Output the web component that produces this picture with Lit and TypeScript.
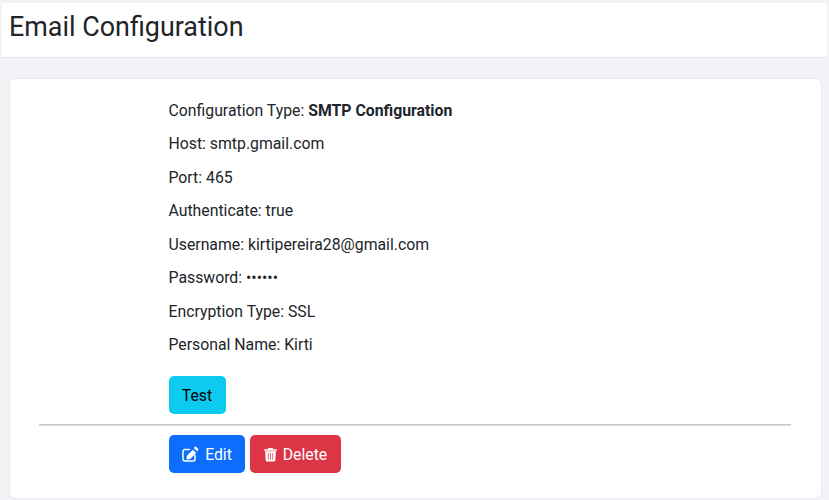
import { LitElement, html, css } from "lit";
import { customElement } from "lit/decorators.js";

@customElement("app-root")
export class AppRoot extends LitElement {
  static styles = css`
    :host { display: block; width: 829px; height: 500px; overflow: hidden; background: #f1f3f6; font-family: Roboto, "Liberation Sans", sans-serif; color: #212529; font-size: 15.8px; box-sizing: border-box; padding: 3px 2px 0 2px; }
    * { box-sizing: border-box; }
    .head { height: 55px; background: #fff; border-bottom: 1px solid #e4e5e8; padding: 8px 0 0 7px; margin-bottom: 21px; }
    h1 { margin: 0; font-size: 26.9px; font-weight: 400; line-height: 33px; color: #212529; }
    .card { background: #fff; margin: 0 6px 0 7.5px; height: 419px; border-radius: 5px; box-shadow: 0 0 2px rgba(0,0,0,.14); padding: 21px 30px 0 29.5px; }
    .body { padding-left: 129.5px; }
    p { margin: 0 0 11.43px; line-height: 22px; height: 22px; }
    b { font-weight: 700; }
    .btn { display: inline-flex; align-items: center; justify-content: center; gap: 5px; height: 38px; border-radius: 5px; font-size: 15.8px; border: 0; padding: 0; font-family: inherit; }
    .test { background: #0dcaf0; color: #000; width: 57px; margin-top: 9px; }
    hr { border: 0; border-top: 1px solid #c9c9c9; border-bottom: 1px solid #dedede; margin: 10px 0 9px; height: 2px; }
    .row { display: flex; gap: 5px; padding-left: 129.5px; }
    .edit { background: #0d6efd; color: #fff; width: 76px; gap: 6px; padding-left: 1px; }
    .edit svg { width: 17px; height: 16px; fill: none; }
    .del { background: #dc3545; color: #fff; width: 91px; }
    svg { width: 15px; height: 15px; fill: currentColor; display: block; }
  `;

  render() {
    return html`
      <div class="head"><h1>Email Configuration</h1></div>
      <div class="card">
        <div class="body">
          <p>Configuration Type: <b>SMTP Configuration</b></p>
          <p>Host: smtp.gmail.com</p>
          <p>Port: 465</p>
          <p>Authenticate: true</p>
          <p>Username: kirtipereira28@gmail.com</p>
          <p>Password: ••••••</p>
          <p>Encryption Type: SSL</p>
          <p>Personal Name: Kirti</p>
          <button class="btn test">Test</button>
        </div>
        <hr />
        <div class="row">
          <button class="btn edit">
            <svg viewBox="0 0 17 16">
              <path d="M8 3.5H3A2 2 0 0 0 1 5.5v7.5a2 2 0 0 0 2 2h8a2 2 0 0 0 2-2V9" stroke="currentColor" stroke-width="1.5"/>
              <path d="M14.2.9l1.9 1.9c.4.4.4 1 0 1.4l-1 1-3.3-3.3 1-1c.4-.4 1-.4 1.4 0zM10.9 3.8l3.3 3.3-6 6-3.7.4.4-3.7z" fill="currentColor"/>
            </svg>
            Edit
          </button>
          <button class="btn del">
            <svg viewBox="0 0 16 16"><path d="M5.7 1h4.6l.7 1.4h3.2c.4 0 .8.4.8.8s-.4.8-.8.8H1.8c-.4 0-.8-.4-.8-.8s.4-.8.8-.8H5zM2.3 4.5h11.4l-.6 9.6c0 .9-.8 1.4-1.5 1.4H4.4c-.7 0-1.5-.5-1.5-1.4zM5.2 6.5v7h.8v-7zm2.4 0v7h.8v-7zm2.4 0v7h.8v-7z"/></svg>
            Delete
          </button>
        </div>
      </div>
    `;
  }
}
